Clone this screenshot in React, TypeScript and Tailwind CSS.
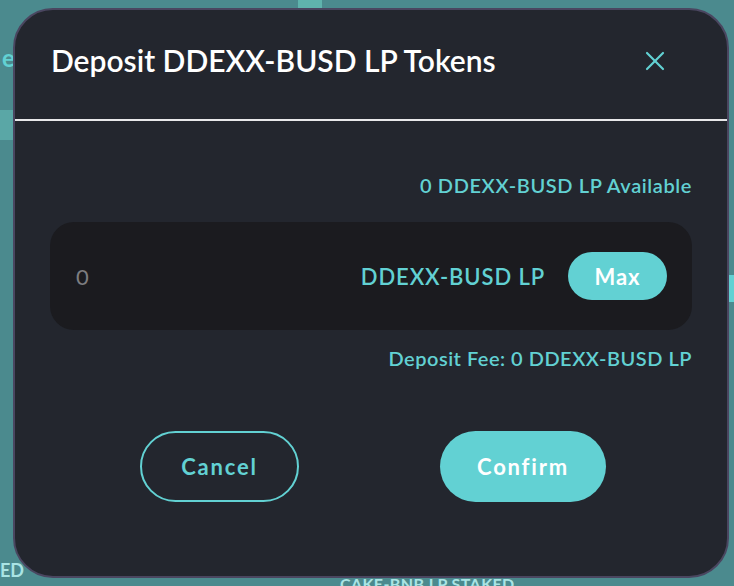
import { X } from 'lucide-react';

function PageBehind() {
  return (
    <div className="absolute inset-0 bg-[#4b8a8e] text-[#62d1d3]">
      <div className="absolute left-[2px] top-[40px] text-[24px] font-bold">ef</div>
      <div className="absolute left-0 top-[110px] h-[30px] w-[20px] bg-[#5aa7a6]" />
      <div className="absolute left-[298px] top-0 h-[8px] w-[24px] bg-[#5fb3ad]" />
      <div className="absolute right-0 top-[275px] h-[27px] w-[10px] bg-[#62d1d3]" />
      <div className="absolute left-0 bottom-[2px] text-[18px] font-bold text-[#a9e4e4]">ED</div>
      <div className="absolute left-[340px] top-[572px] text-[16px] font-bold tracking-wide text-[#a9e4e4]">
        CAKE-BNB LP STAKED
      </div>
    </div>
  );
}

export default function App() {
  return (
    <div
      className="relative h-[586px] w-[734px] overflow-hidden"
      style={{ fontFamily: 'Lato, "Open Sans", sans-serif' }}
    >
      <PageBehind />
      <div className="absolute left-[13px] top-[8px] flex h-[570px] w-[716px] flex-col rounded-[40px] border-2 border-[#4a4660] bg-[#23262e]">
        <div className="flex h-[109px] items-center justify-between pl-[36px] pr-[56px] pb-[8px]">
          <h1 className="text-[30px] font-semibold text-white">Deposit DDEXX-BUSD LP Tokens</h1>
          <X className="h-[32px] w-[32px] text-[#62d1d3]" strokeWidth={1.6} />
        </div>
        <div className="h-[2px] bg-[#e8e8ea]" />
        <div className="flex flex-col px-[35px] pt-[52px]">
          <div className="text-right text-[20px] font-semibold leading-[24px] tracking-[0.6px] text-[#62d1d3]">
            0 DDEXX-BUSD LP Available
          </div>
          <div className="mt-[25px] flex h-[108px] items-center rounded-[24px] bg-[#1b1b1f] pl-[26px] pr-[25px]">
            <span className="flex-1 text-[22px] text-[#7d7d80]">0</span>
            <span className="text-[22px] font-semibold tracking-[0.9px] text-[#62d1d3]">DDEXX-BUSD LP</span>
            <button className="ml-[23px] h-[48px] w-[99px] rounded-full bg-[#62d1d3] text-[22px] font-bold tracking-[1px] text-white">
              Max
            </button>
          </div>
          <div className="mt-[16px] text-right text-[20px] font-semibold leading-[24px] tracking-[0.5px] text-[#62d1d3]">
            Deposit Fee: 0 DDEXX-BUSD LP
          </div>
          <div className="mt-[61px] flex justify-center gap-[141px] pl-[4px]">
            <button className="h-[71px] w-[159px] rounded-full border-2 border-[#62d1d3] text-[22px] font-bold tracking-[1.8px] text-[#62d1d3]">
              Cancel
            </button>
            <button className="h-[71px] w-[166px] rounded-full bg-[#62d1d3] text-[22px] font-bold tracking-[1.8px] text-white">
              Confirm
            </button>
          </div>
        </div>
      </div>
    </div>
  );
}
